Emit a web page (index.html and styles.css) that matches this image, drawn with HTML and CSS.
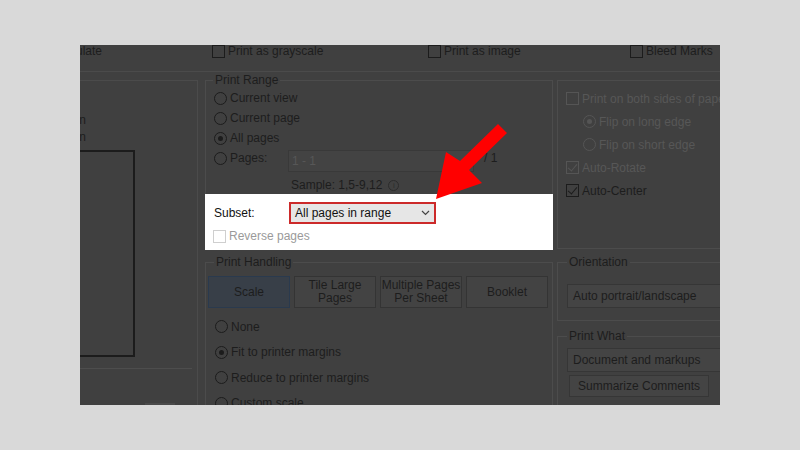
FILE: index.html
```html
<!DOCTYPE html>
<html lang="en">
<head>
  <meta charset="UTF-8" />
  <meta name="viewport" content="width=device-width, initial-scale=1.0"/>
  <title>Print</title>
  <link rel="stylesheet" href="styles.css">
</head>
<body>

  <div class="screen">
    <div class="topbar">
      <div class="top-cut"><span>Simulate</span></div>
      <div class="check top-item w-gray"><span class="box"></span>Print as grayscale</div>
      <div class="check top-item w-image"><span class="box"></span>Print as image</div>
      <div class="check top-item"><span class="box"></span>Bleed Marks</div>
    </div>

    <div class="columns">
      <div class="col-left">
        <div class="cut-line"><span>Orientation</span></div>
        <div class="cut-line"><span>Portrait plain</span></div>
        <div class="preview"></div>
        <div class="left-rule"></div>
        <div class="left-tab"></div>
      </div>

      <div class="col-mid">
        <fieldset class="group range">
          <legend>Print Range</legend>
          <div class="row"><span class="radio"></span>Current view</div>
          <div class="row"><span class="radio"></span>Current page</div>
          <div class="row"><span class="radio on"></span>All pages</div>
          <div class="row pages-row">
            <span class="radio"></span><span class="pages-label">Pages:</span>
            <span class="pages-input">1 - 1</span>
            <span class="of">/ 1</span>
          </div>
          <div class="sample">Sample: 1,5-9,12 <span class="info">i</span></div>

          <div class="highlight">
            <div class="subset-row">
              <span class="subset-label">Subset:</span>
              <span class="subset-select">All pages in range
                <svg class="chev" width="9" height="6" viewBox="0 0 9 6"><path d="M1 1 L4.5 4.5 L8 1" fill="none" stroke="#444" stroke-width="1.2"/></svg>
              </span>
            </div>
            <div class="reverse-row"><span class="box light"></span>Reverse pages</div>
          </div>
        </fieldset>

        <fieldset class="group handling">
          <legend>Print Handling</legend>
          <div class="tabs">
            <div class="tab active">Scale</div>
            <div class="tab">Tile Large<br>Pages</div>
            <div class="tab">Multiple Pages<br>Per Sheet</div>
            <div class="tab">Booklet</div>
          </div>
          <div class="scale-list">
            <div class="row tall"><span class="radio"></span>None</div>
            <div class="row tall"><span class="radio on"></span>Fit to printer margins</div>
            <div class="row tall"><span class="radio"></span>Reduce to printer margins</div>
            <div class="row tall"><span class="radio"></span>Custom scale</div>
          </div>
        </fieldset>
      </div>

      <div class="col-right">
        <fieldset class="group duplex">
          <div class="row mid dim"><span class="box"></span>Print on both sides of paper</div>
          <div class="row mid dim sub"><span class="radio on"></span>Flip on long edge</div>
          <div class="row mid dim sub"><span class="radio"></span>Flip on short edge</div>
          <div class="row mid dim"><span class="box ticked"></span>Auto-Rotate</div>
          <div class="row mid"><span class="box ticked"></span>Auto-Center</div>
        </fieldset>

        <fieldset class="group orient">
          <legend>Orientation</legend>
          <div class="select">Auto portrait/landscape</div>
        </fieldset>

        <fieldset class="group what">
          <legend>Print What</legend>
          <div class="select">Document and markups</div>
          <div class="btn">Summarize Comments</div>
        </fieldset>
      </div>
    </div>
  </div>

  <svg class="arrow" width="800" height="450" viewBox="0 0 800 450">
    <polygon points="436,199 446,152 460,161 498,124 507,133 469,170 482,183" fill="#ff0000"/>
  </svg>

</body>
</html>
```

FILE: styles.css
```css
body {
  margin: 0;
  background: #d9d9d9;
  font-family: "Liberation Sans", Arial, sans-serif;
  font-size: 12px;
  color: #1d1d1d;
}
.screen {
  width: 640px;
  height: 360px;
  margin: 45px 0 0 80px;
  background: #404040;
  overflow: hidden;
  position: relative;
}
.topbar {
  display: flex;
  height: 27px;
  border-bottom: 1px solid #4b4b4b;
  box-sizing: border-box;
}
.top-cut {
  width: 132px;
  display: flex;
  justify-content: flex-end;
  margin-top: -1px;
  height: 14px;
}
.top-cut span {
  margin-right: 110px;
  white-space: nowrap;
}
.top-item {
  margin-top: -1px;
  height: 14px;
}
.w-gray { width: 216px; }
.w-image { width: 202px; }
.check {
  display: flex;
  align-items: center;
  white-space: nowrap;
}
.box {
  width: 11px;
  height: 11px;
  border: 1px solid #1c1c1c;
  margin-right: 3px;
  flex: none;
  position: relative;
}
.box.light {
  border-color: #cfcfcf;
  background: #fff;
}
.box.ticked::after {
  content: "";
  position: absolute;
  left: 3px;
  top: 0;
  width: 4px;
  height: 8px;
  border: solid #1c1c1c;
  border-width: 0 1.5px 1.5px 0;
  transform: rotate(40deg);
}
.dim .box.ticked::after { border-color: #555; }
.radio {
  width: 11px;
  height: 11px;
  border: 1px solid #1c1c1c;
  border-radius: 50%;
  margin-right: 3px;
  flex: none;
  display: flex;
  align-items: center;
  justify-content: center;
}
.radio.on::after {
  content: "";
  width: 5px;
  height: 5px;
  border-radius: 50%;
  background: #1c1c1c;
}
.dim .radio { border-color: #555; }
.dim .radio.on::after { background: #555; }

.columns {
  display: flex;
  margin-top: 8px;
}
.col-left {
  width: 118px;
  height: 330px;
  border-top: 1px solid #4b4b4b;
  border-right: 1px solid #4b4b4b;
  flex: none;
  padding-top: 30px;
  box-sizing: border-box;
}
.cut-line {
  width: 6px;
  height: 17px;
  display: flex;
  justify-content: flex-end;
  align-items: center;
  white-space: nowrap;
}
.preview {
  width: 59px;
  height: 207px;
  margin: 5px 0 0 -4px;
  border: 2px solid #1c1c1c;
  box-sizing: border-box;
}
.left-rule {
  width: 112px;
  height: 1px;
  background: #4d4d4d;
  margin-top: 11px;
}
.left-tab {
  width: 30px;
  height: 3px;
  background: #4a4a4a;
  margin: 34px 0 0 65px;
}

.group {
  margin: 0;
  border: 1px solid #4c4c4c;
  padding: 0 8px;
  min-width: 0;
}
.group legend {
  padding: 0 2px;
  margin-left: -1px;
  line-height: 14px;
}
.col-mid {
  width: 348px;
  margin-left: 7px;
  flex: none;
  margin-top: -7px;
}
.row {
  display: flex;
  align-items: center;
  height: 20px;
  white-space: nowrap;
}
.row.tall { height: 25.5px; }
.row.mid { height: 23px; }
.range { padding-top: 1px; padding-bottom: 0; }
.pages-label { width: 58px; }
.pages-input {
  width: 181px;
  height: 20px;
  margin-top: 6px;
  border: 1px solid #393939;
  background: #434343;
  color: #575757;
  padding-left: 3px;
  display: flex;
  align-items: center;
  box-sizing: content-box;
}
.of { margin-left: 10px; }
.sample {
  height: 18px;
  margin-top: 8px;
  padding-left: 77px;
  display: flex;
  align-items: center;
}
.info {
  width: 9px;
  height: 9px;
  border: 1px solid #2c2c2c;
  border-radius: 50%;
  font-size: 8px;
  line-height: 9px;
  text-align: center;
  color: #2c2c2c;
  margin-left: 6px;
}
.highlight {
  background: #fff;
  margin: 0 -9px -1px;
  padding: 8px 9px 8px 9px;
  height: 40px;
}
.subset-row {
  display: flex;
  align-items: center;
  height: 22px;
}
.subset-label {
  width: 75px;
  color: #111;
}
.subset-select {
  width: 139px;
  height: 18px;
  border: 2px solid #cc2a2a;
  background: #e6e6e6;
  color: #111;
  padding-left: 4px;
  display: flex;
  align-items: center;
  justify-content: space-between;
}
.chev { margin-right: 4px; }
.reverse-row {
  display: flex;
  align-items: center;
  height: 12px;
  margin-top: 6px;
  color: #9a9a9a;
}
.reverse-row .box { margin-left: -1px; }

.handling {
  margin-top: 5px;
  padding: 0 2px;
  height: 200px;
}
.handling legend { margin-left: 6px; }
.tabs {
  display: flex;
  gap: 4px;
  margin-top: 7px;
}
.tab {
  width: 82px;
  height: 32px;
  box-sizing: border-box;
  border: 1px solid #343434;
  background: #434343;
  display: flex;
  align-items: center;
  justify-content: center;
  text-align: center;
  line-height: 13px;
}
.tab.active {
  background: #383f48;
  border-color: #2a3a4e;
}
.scale-list {
  margin-top: 6px;
  padding-left: 7px;
}

.col-right {
  width: 190px;
  margin-left: 4px;
  flex: none;
}
.duplex {
  height: 169px;
  padding-top: 6px;
  box-sizing: border-box;
}
.dim { color: #575757; }
.dim .box { border-color: #555; }
.sub { padding-left: 17px; }
.orient {
  margin-top: 6px;
  padding: 15px 0 12px 9px;
}
.orient legend { margin-left: 0; }
.select {
  height: 22px;
  border: 1px solid #363636;
  background: #444;
  padding-left: 5px;
  display: flex;
  align-items: center;
  white-space: nowrap;
}
.what {
  margin-top: 8px;
  padding: 5px 0 10px 9px;
}
.what legend { margin-left: 0; }
.btn {
  width: 138px;
  height: 20px;
  margin: 3px 0 0 2px;
  border: 1px solid #363636;
  background: #444;
  display: flex;
  align-items: center;
  justify-content: center;
}
.arrow {
  position: absolute;
  left: 0;
  top: 0;
}
```
